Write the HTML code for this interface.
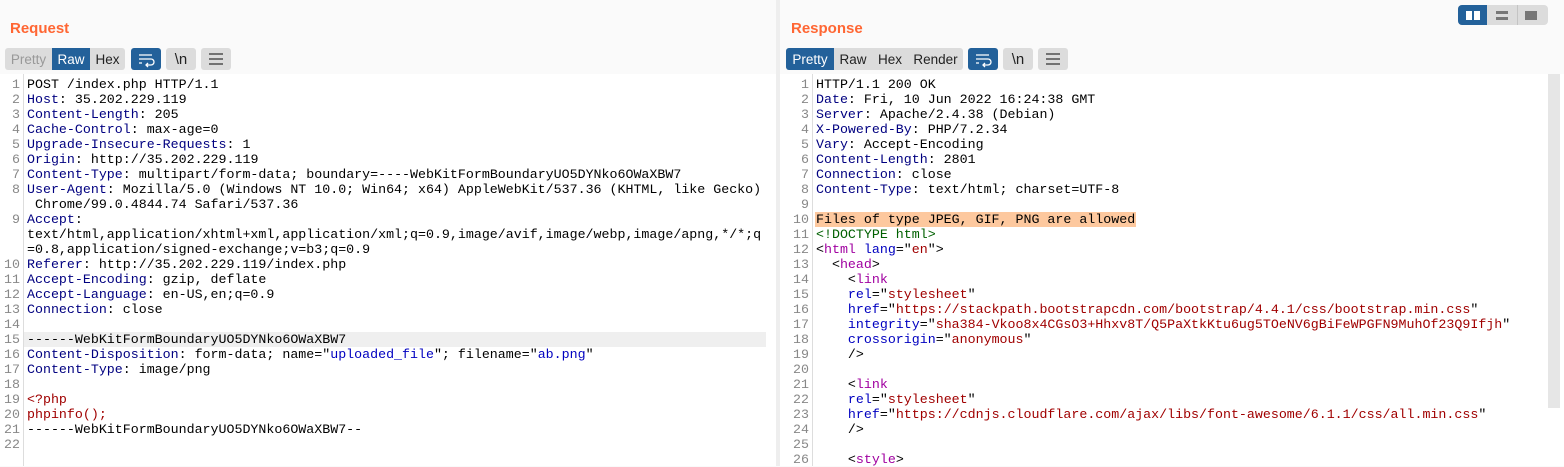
<!DOCTYPE html>
<html><head><style>
*{margin:0;padding:0;box-sizing:border-box}
body{width:1564px;height:466px;background:#fafafa;font-family:"Liberation Sans",sans-serif;position:relative;overflow:hidden}
.pane{position:absolute;top:0;height:466px;background:#fafafa}
.title{position:absolute;top:20px;color:#ff6633;font-weight:bold;font-size:15px}
.btn{position:absolute;top:48px;height:22px;background:#dcdcdc;border-radius:3px;font-size:13.5px;color:#222;line-height:23px}
.seg{display:flex}
.seg span{display:block;flex:none;height:22px;text-align:center;white-space:nowrap}
.seg .on{background:#23619a;color:#fff}
.blue{background:#23619a}
.ed{position:absolute;top:74px;bottom:0;background:#fff;font-family:"Liberation Mono",monospace;font-size:13.3px;line-height:15px}
.gut{position:absolute;top:0;bottom:0;left:0;border-right:1px solid #ddd;color:#888;text-align:right}
.txt{position:absolute;top:3px;white-space:pre;color:#000}
.gl{position:absolute;top:3px;white-space:pre}
.h{color:#000080}.s{color:#0000c0}.p{color:#a00000}
.t{color:#a000a0}.a{color:#0000c0}.v{color:#a00000}.d{color:#006000}
</style></head><body>
<div class="pane" style="left:0;width:776px">
<div class="title" style="left:10px">Request</div>
<div class="btn seg" style="left:5px;width:120px;overflow:hidden"><span style="color:#999;width:47px">Pretty</span><span class="on" style="width:38px">Raw</span><span style="width:35px">Hex</span></div>
<div class="btn blue" style="left:131px;width:30px"><svg width="30" height="22"><path d="M8 7h13M8 11h12a3 3 0 0 1 0 6h-5M17 15l-2 2 2 2M8 15h3" stroke="#fff" stroke-width="1.3" fill="none"/></svg></div>
<div class="btn" style="left:166px;width:30px;text-align:center;font-size:15px">\n</div>
<div class="btn" style="left:201px;width:30px"><svg width="30" height="22"><path d="M8 6h14M8 11h14M8 16h14" stroke="#333" stroke-width="1.3"/></svg></div>
<div class="ed" style="left:0;width:776px">
<div class="gut" style="width:24px"><div class="gl" style="right:3px">1
2
3
4
5
6
7
8

9


10
11
12
13
14
15
16
17
18
19
20
21
22</div></div>
<div style="position:absolute;left:24px;top:258px;width:742px;height:15px;background:#efefef"></div>
<div class="txt" style="left:27px">POST /index.php HTTP/1.1
<span class="h">Host</span>: 35.202.229.119
<span class="h">Content-Length</span>: 205
<span class="h">Cache-Control</span>: max-age=0
<span class="h">Upgrade-Insecure-Requests</span>: 1
<span class="h">Origin</span>: http://35.202.229.119
<span class="h">Content-Type</span>: multipart/form-data; boundary=----WebKitFormBoundaryUO5DYNko6OWaXBW7
<span class="h">User-Agent</span>: Mozilla/5.0 (Windows NT 10.0; Win64; x64) AppleWebKit/537.36 (KHTML, like Gecko)
 Chrome/99.0.4844.74 Safari/537.36
<span class="h">Accept</span>:
text/html,application/xhtml+xml,application/xml;q=0.9,image/avif,image/webp,image/apng,*/*;q
=0.8,application/signed-exchange;v=b3;q=0.9
<span class="h">Referer</span>: http://35.202.229.119/index.php
<span class="h">Accept-Encoding</span>: gzip, deflate
<span class="h">Accept-Language</span>: en-US,en;q=0.9
<span class="h">Connection</span>: close

------WebKitFormBoundaryUO5DYNko6OWaXBW7
<span class="h">Content-Disposition</span>: form-data; name="<span class="s">uploaded_file</span>"; filename="<span class="s">ab.png</span>"
<span class="h">Content-Type</span>: image/png

<span class="p">&lt;?php</span>
<span class="p">phpinfo();</span>
------WebKitFormBoundaryUO5DYNko6OWaXBW7--
</div>
<div style="position:absolute;left:776px;top:360px;color:#aaa;font-size:10px;line-height:4px">.<br>.<br>.</div>
</div></div>
<div style="position:absolute;left:776px;top:0;width:4px;height:466px;background:#eeeeee"></div>
<div class="pane" style="left:780px;width:784px">
<div class="title" style="left:11px">Response</div>
<div style="position:absolute;left:678px;top:5px;width:90px;height:20px;border-radius:4px;background:#dcdcdc;overflow:hidden">
<div style="position:absolute;left:0;top:0;width:29px;height:20px;background:#23619a"></div>
<div style="position:absolute;left:8px;top:6px;width:6px;height:9px;background:#fff"></div><div style="position:absolute;left:16px;top:6px;width:6px;height:9px;background:#fff"></div>
<div style="position:absolute;left:38px;top:6px;width:12px;height:3px;background:#777"></div><div style="position:absolute;left:38px;top:12px;width:12px;height:3px;background:#777"></div>
<div style="position:absolute;left:59px;width:1px;top:0;height:20px;background:#c4c4c4"></div>
<div style="position:absolute;left:67px;top:6px;width:12px;height:9px;background:#777"></div>
</div>
<div class="btn seg" style="left:6px;width:177px;overflow:hidden"><span class="on" style="width:48px">Pretty</span><span style="width:38px">Raw</span><span style="width:36px">Hex</span><span style="width:55px">Render</span></div>
<div class="btn blue" style="left:188px;width:30px"><svg width="30" height="22"><path d="M8 7h13M8 11h12a3 3 0 0 1 0 6h-5M17 15l-2 2 2 2M8 15h3" stroke="#fff" stroke-width="1.3" fill="none"/></svg></div>
<div class="btn" style="left:223px;width:30px;text-align:center;font-size:15px">\n</div>
<div class="btn" style="left:258px;width:30px"><svg width="30" height="22"><path d="M8 6h14M8 11h14M8 16h14" stroke="#333" stroke-width="1.3"/></svg></div>
<div class="ed" style="left:0;width:784px">
<div class="gut" style="width:33px"><div class="gl" style="right:3px">1
2
3
4
5
6
7
8
9
10
11
12
13
14
15
16
17
18
19
20
21
22
23
24
25
26</div></div>
<div style="position:absolute;left:35px;top:138px;width:321px;height:15px;background:#fdc89e"></div>
<div class="txt" style="left:36px">HTTP/1.1 200 OK
<span class="h">Date</span>: Fri, 10 Jun 2022 16:24:38 GMT
<span class="h">Server</span>: Apache/2.4.38 (Debian)
<span class="h">X-Powered-By</span>: PHP/7.2.34
<span class="h">Vary</span>: Accept-Encoding
<span class="h">Content-Length</span>: 2801
<span class="h">Connection</span>: close
<span class="h">Content-Type</span>: text/html; charset=UTF-8

Files of type JPEG, GIF, PNG are allowed
<span class="d">&lt;!DOCTYPE html&gt;</span>
&lt;<span class="t">html</span> <span class="a">lang</span>="<span class="v">en</span>"&gt;
  &lt;<span class="t">head</span>&gt;
    &lt;<span class="t">link</span>
    <span class="a">rel</span>="<span class="v">stylesheet</span>"
    <span class="a">href</span>="<span class="v">https://stackpath.bootstrapcdn.com/bootstrap/4.4.1/css/bootstrap.min.css</span>"
    <span class="a">integrity</span>="<span class="v">sha384-Vkoo8x4CGsO3+Hhxv8T/Q5PaXtkKtu6ug5TOeNV6gBiFeWPGFN9MuhOf23Q9Ifjh</span>"
    <span class="a">crossorigin</span>="<span class="v">anonymous</span>"
    /&gt;

    &lt;<span class="t">link</span>
    <span class="a">rel</span>="<span class="v">stylesheet</span>"
    <span class="a">href</span>="<span class="v">https://cdnjs.cloudflare.com/ajax/libs/font-awesome/6.1.1/css/all.min.css</span>"
    /&gt;

    &lt;<span class="t">style</span>&gt;</div>
<div style="position:absolute;left:768px;top:0;width:12px;height:334px;background:#e6e6e6"></div>
</div></div>
</body></html>
